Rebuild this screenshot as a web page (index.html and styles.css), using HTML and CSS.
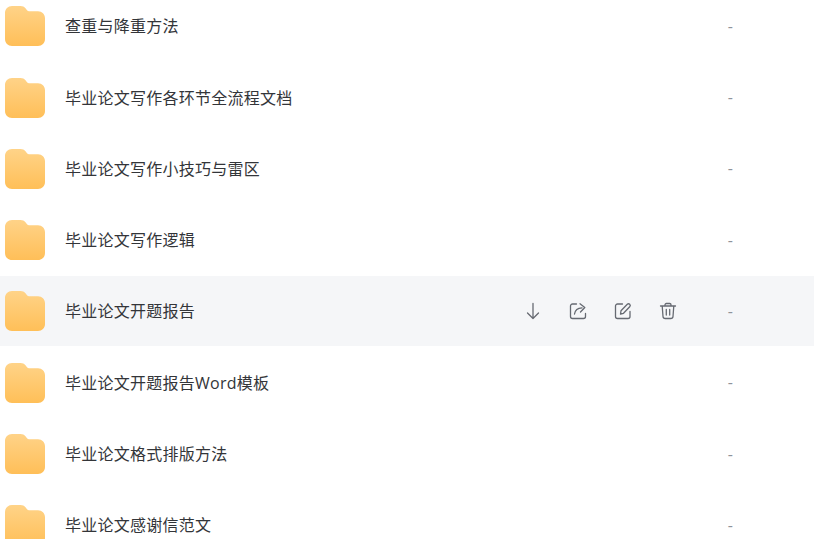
FILE: index.html
```html
<!DOCTYPE html>
<html lang="zh">
<head>
<meta charset="utf-8">
<title>文件列表</title>
<link rel="stylesheet" href="styles.css">
</head>
<body>
<svg width="0" height="0" class="defs">
  <defs>
    <linearGradient id="fg" x1="0" y1="0" x2="0" y2="1">
      <stop offset="0" stop-color="#ffd388"/>
      <stop offset="1" stop-color="#ffbf58"/>
    </linearGradient>
    <symbol id="folder" viewBox="0 0 40 40">
      <path fill="url(#fg)" d="M0 7C0 3 3 0 7 0h8.500c2.200 0 3.700.8 5 2.200L22 4.200c.8.800 1.500 1 2.600 1H33c4 0 7 3 7 7V33c0 4-3 7-7 7H7c-4 0-7-3-7-7Z"/>
    </symbol>
  </defs>
</svg>
<main class="list">
  <div class="row"><svg class="folder"><use href="#folder"/></svg><span class="name">查重与降重方法</span><span class="size">-</span></div>
  <div class="row"><svg class="folder"><use href="#folder"/></svg><span class="name">毕业论文写作各环节全流程文档</span><span class="size">-</span></div>
  <div class="row"><svg class="folder"><use href="#folder"/></svg><span class="name">毕业论文写作小技巧与雷区</span><span class="size">-</span></div>
  <div class="row"><svg class="folder"><use href="#folder"/></svg><span class="name">毕业论文写作逻辑</span><span class="size">-</span></div>
  <div class="row hover"><svg class="folder"><use href="#folder"/></svg><span class="name">毕业论文开题报告</span>
    <div class="actions">
      <svg class="act" viewBox="0 0 20 20"><path d="M10 2.500V17.500M4.500 12 10 17.500 15.500 12"/></svg>
      <svg class="act" viewBox="0 0 20 20"><path d="M8.500 3H4.500C3.400 3 2.500 3.900 2.500 5V15.500C2.500 16.600 3.400 17.500 4.500 17.500H15.500C16.600 17.500 17.500 16.600 17.500 15.500V12.500"/><path d="M6.500 13C7 9.500 9.500 7 14 6.800M12 2.800 16.800 6.500 12.500 11"/></svg>
      <svg class="act" viewBox="0 0 20 20"><path d="M9.500 3H4.500C3.400 3 2.500 3.900 2.500 5V15.500C2.500 16.600 3.400 17.500 4.500 17.500H15C16.100 17.500 17 16.600 17 15.500V10.500"/><path d="M7.500 13 8 9.800 14.300 3.300C15 2.600 16 2.600 16.700 3.300 17.400 4 17.400 5 16.700 5.700L10.500 12.300Z"/></svg>
      <svg class="act" viewBox="0 0 20 20"><path d="M2.500 5H17.500M7 5V3.800C7 3 7.600 2.500 8.300 2.500H11.700C12.400 2.500 13 3 13 3.800V5M4.200 5 5 15.500C5.100 16.700 6 17.500 7.200 17.500H12.800C14 17.500 14.900 16.700 15 15.500L15.800 5M8.300 8.500V14M11.700 8.500V14"/></svg>
    </div>
    <span class="size">-</span></div>
  <div class="row"><svg class="folder"><use href="#folder"/></svg><span class="name">毕业论文开题报告Word模板</span><span class="size">-</span></div>
  <div class="row"><svg class="folder"><use href="#folder"/></svg><span class="name">毕业论文格式排版方法</span><span class="size">-</span></div>
  <div class="row"><svg class="folder"><use href="#folder"/></svg><span class="name">毕业论文感谢信范文</span><span class="size">-</span></div>
</main>
</body>
</html>
```
FILE: styles.css
```css
html, body {
  margin: 0;
  padding: 0;
  height: 100%;
  overflow: hidden;
  background: #fff;
}
.defs {
  display: block;
  height: 0;
}
.list {
  display: flex;
  flex-direction: column;
  gap: 1.3px;
  margin-top: -8.75px;
  font-family: "Open Sans", "Noto Sans CJK SC", sans-serif;
}
.row {
  display: flex;
  align-items: center;
  height: 70px;
  flex: none;
  padding-left: 5px;
  box-sizing: border-box;
}
.hover {
  background: #f5f6f8;
}
.folder {
  width: 40px;
  height: 40px;
  flex: none;
}
.name {
  margin-left: 20px;
  font-size: 16px;
  letter-spacing: 0.25px;
  line-height: 20px;
  color: #333539;
}
.actions {
  position: absolute;
  left: 523px;
  display: flex;
  gap: 25px;
}
.act {
  width: 20px;
  height: 20px;
  fill: none;
  stroke: #666a72;
  stroke-width: 1.3;
  stroke-linecap: round;
  stroke-linejoin: round;
}
.size {
  margin-left: auto;
  margin-right: 81px;
  margin-bottom: 1px;
  font-size: 16px;
  color: #8f939b;
}
```
